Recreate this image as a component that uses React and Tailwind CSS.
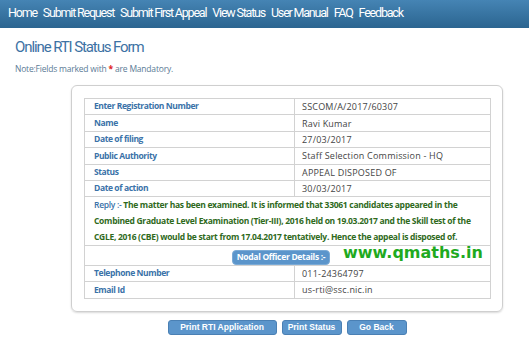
import React from "react";

const rows1 = [
  ["Enter Registration Number", "SSCOM/A/2017/60307"],
  ["Name", "Ravi Kumar"],
  ["Date of filing", "27/03/2017"],
  ["Public Authority", "Staff Selection Commission - HQ"],
  ["Status", "APPEAL DISPOSED OF"],
  ["Date of action", "30/03/2017"],
];
const rows2 = [
  ["Telephone Number", "011-24364797"],
  ["Email Id", "us-rti@ssc.nic.in"],
];

function Row({ l, v }) {
  return (
    <tr className="h-[16.4px]">
      <td className="border border-[#d2d2d2] pl-[9px] w-[210px] text-[8.5px] tracking-[-0.4px] font-bold text-[#3a72a8] leading-none">{l}</td>
      <td className="border border-[#d2d2d2] pl-[7px] text-[9px] tracking-[0.2px] text-[#444] leading-none">{v}</td>
    </tr>
  );
}

export default function App() {
  const nav = ["Home", "Submit Request", "Submit First Appeal", "View Status", "User Manual", "FAQ", "Feedback"];
  return (
    <div className="relative w-[529px] h-[350px] bg-white overflow-hidden" style={{ fontFamily: "Roboto, 'Open Sans', sans-serif" }}>
      <div className="h-[28px] bg-gradient-to-b from-[#4584b4] to-[#2b6590] flex items-center pl-[8px] gap-[6px] pb-[2px]">
        {nav.map((n) => (
          <span key={n} className="text-white text-[12.5px] tracking-[-1.2px] leading-none">{n}</span>
        ))}
      </div>
      <div className="pl-[15px] mt-[9px] text-[15px] leading-[20px] tracking-[-1.1px] text-[#3d72a4]">Online RTI Status Form</div>
      <div className="pl-[15px] mt-[6px] text-[8.5px] leading-[12px] tracking-[-0.2px] text-[#5b7b96]" style={{ fontFamily: "'Open Sans', sans-serif" }}>
        Note:Fields marked with <span className="text-[#e02020] font-bold">*</span> are Mandatory.
      </div>
      <div className="ml-[71px] mt-[10px] w-[432px] border border-[#cfcfcf] rounded-[6px] shadow-[0_1px_2px_rgba(0,0,0,0.15)] px-[12px] pt-[12px] pb-[12px]" style={{ fontFamily: "'Open Sans', sans-serif" }}>
        <table className="w-[407px] border-collapse">
          <tbody>
            {rows1.map(([l, v]) => <Row key={l} l={l} v={v} />)}
            <tr className="h-[49px]">
              <td colSpan={2} className="border border-[#d2d2d2] pl-[9px] pr-[2px] text-[8.5px] leading-[16px] tracking-[-0.3px] font-bold text-[#2f6a1c] whitespace-nowrap">
                <span className="text-[#3a72a8] font-semibold">Reply :- </span>
                The matter has been examined. It is informed that 33061 candidates appeared in the<br />
                Combined Graduate Level Examination (Tier-III), 2016 held on 19.03.2017 and the Skill test of the<br />
                CGLE, 2016 (CBE) would be start from 17.04.2017 tentatively. Hence the appeal is disposed of.
              </td>
            </tr>
            <tr className="h-[16px]">
              <td colSpan={2} className="border border-[#d2d2d2] text-center leading-none">
                <span className="inline-block bg-[#5b95cb] text-white text-[8.5px] tracking-[-0.3px] font-bold rounded-[4px] px-[4px] py-[2px] ml-[-13px] border border-[#7aaad6]">Nodal Officer Details :-</span>
              </td>
            </tr>
            {rows2.map(([l, v]) => <Row key={l} l={l} v={v} />)}
          </tbody>
        </table>
      </div>
      <div className="flex justify-center gap-[5px] mt-[8px] pl-[45px]" style={{ fontFamily: "'Liberation Sans', Arial, sans-serif" }}>
        <button className="w-[109px] h-[15px] bg-[#5b95cb] border border-[#4a80b4] rounded-[3px] text-white text-[8.5px] font-bold leading-none">Print RTI Application</button>
        <button className="w-[60px] h-[15px] bg-[#5b95cb] border border-[#4a80b4] rounded-[3px] text-white text-[8.5px] font-bold leading-none">Print Status</button>
        <button className="w-[60px] h-[15px] bg-[#5b95cb] border border-[#4a80b4] rounded-[3px] text-white text-[8.5px] font-bold leading-none">Go Back</button>
      </div>
      <div className="absolute left-[343px] top-[243px] text-[16px] font-bold text-[#1faa1f] tracking-[0px] leading-[20px]" style={{ fontFamily: "'DejaVu Sans', sans-serif" }}>
        www.qmaths.in
      </div>
    </div>
  );
}
